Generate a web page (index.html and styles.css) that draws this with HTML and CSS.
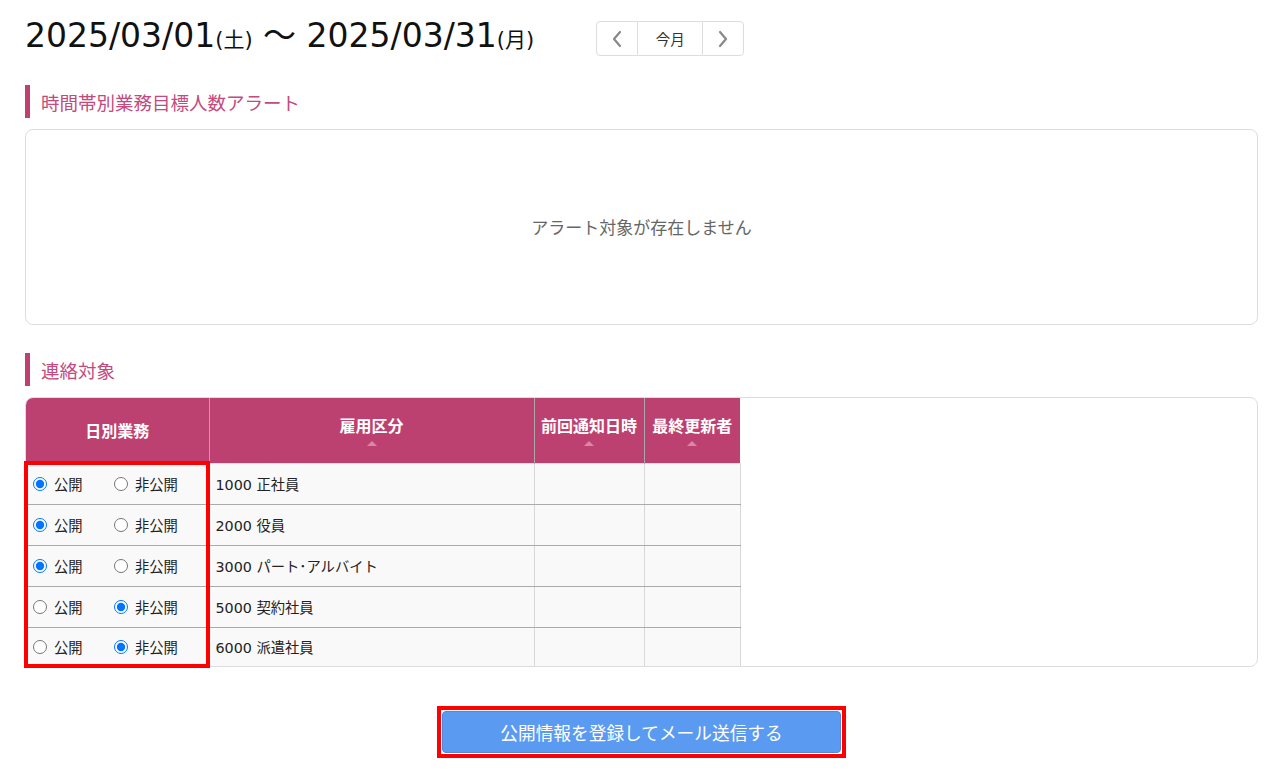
FILE: index.html
```html
<!DOCTYPE html>
<html lang="ja">
<head>
<meta charset="utf-8">
<title>連絡対象</title>
<link rel="stylesheet" href="styles.css">
</head>
<body>
<div class="page">
  <div class="date-bar">
    <h1 class="date-range">2025/03/01<span class="dow">(土)</span> <span class="tilde">〜</span> 2025/03/31<span class="dow">(月)</span></h1>
    <div class="nav-group">
      <button class="nav-btn nav-arrow" type="button" aria-label="前月">
        <svg width="12" height="18" viewBox="0 0 12 18"><path d="M9 2 L3 9 L9 16" fill="none" stroke="#888" stroke-width="2.2" stroke-linecap="round" stroke-linejoin="round"/></svg>
      </button>
      <button class="nav-btn nav-today" type="button">今月</button>
      <button class="nav-btn nav-arrow" type="button" aria-label="翌月">
        <svg width="12" height="18" viewBox="0 0 12 18"><path d="M3 2 L9 9 L3 16" fill="none" stroke="#888" stroke-width="2.2" stroke-linecap="round" stroke-linejoin="round"/></svg>
      </button>
    </div>
  </div>

  <h2 class="section-title">時間帯別業務目標人数アラート</h2>
  <div class="alert-box">アラート対象が存在しません</div>

  <h2 class="section-title section-title-2">連絡対象</h2>
  <div class="table-area">
    <div class="table-box">
      <table class="target-table">
        <thead>
          <tr>
            <th class="col-pub">日別業務</th>
            <th class="col-kind">雇用区分<span class="sort"></span></th>
            <th class="col-date">前回通知日時<span class="sort"></span></th>
            <th class="col-user">最終更新者<span class="sort"></span></th>
          </tr>
        </thead>
        <tbody>
          <tr>
            <td class="pub"><label class="opt"><input type="radio" name="r1" checked>公開</label><label class="opt"><input type="radio" name="r1">非公開</label></td>
            <td>1000 正社員</td><td></td><td></td>
          </tr>
          <tr>
            <td class="pub"><label class="opt"><input type="radio" name="r2" checked>公開</label><label class="opt"><input type="radio" name="r2">非公開</label></td>
            <td>2000 役員</td><td></td><td></td>
          </tr>
          <tr>
            <td class="pub"><label class="opt"><input type="radio" name="r3" checked>公開</label><label class="opt"><input type="radio" name="r3">非公開</label></td>
            <td>3000 パート･アルバイト</td><td></td><td></td>
          </tr>
          <tr>
            <td class="pub"><label class="opt"><input type="radio" name="r4">公開</label><label class="opt"><input type="radio" name="r4" checked>非公開</label></td>
            <td>5000 契約社員</td><td></td><td></td>
          </tr>
          <tr>
            <td class="pub"><label class="opt"><input type="radio" name="r5">公開</label><label class="opt"><input type="radio" name="r5" checked>非公開</label></td>
            <td>6000 派遣社員</td><td></td><td></td>
          </tr>
        </tbody>
      </table>
    </div>
    <div class="highlight"></div>
  </div>

  <div class="submit-row">
    <div class="submit-frame">
      <button class="submit-btn" type="button">公開情報を登録してメール送信する</button>
    </div>
  </div>
</div>
</body>
</html>
```

FILE: styles.css
```css
* { box-sizing: border-box; }
html, body { margin: 0; padding: 0; background: #fff; }
body {
  font-family: "Noto Sans CJK JP", "Noto Sans", "Liberation Sans", sans-serif;
  color: #333;
}
.page {
  width: 1233px;
  margin-left: 25px;
}
.date-bar {
  display: flex;
  align-items: flex-start;
  height: 75px;
}
.date-range {
  margin: 17px 0 0 0;
  font-family: "DejaVu Sans", "Noto Sans CJK JP", sans-serif;
  font-weight: 400;
  font-size: 33px;
  line-height: 1;
  color: #111;
  white-space: nowrap;
}
.dow {
  font-family: "DejaVu Sans", "Noto Sans CJK JP", sans-serif;
  font-size: 21px;
}
.tilde {
  font-family: "Noto Sans CJK JP", sans-serif;
  font-size: 33px;
}
.nav-group {
  display: flex;
  margin-left: 62px;
  margin-top: 21px;
  height: 35px;
}
.nav-btn {
  background: #fff;
  border: 1px solid #ddd;
  margin: 0;
  padding: 0;
  display: flex;
  align-items: center;
  justify-content: center;
  font-family: "Noto Sans CJK JP", sans-serif;
  font-size: 14.5px;
  color: #333;
  height: 35px;
}
.nav-arrow { width: 42px; }
.nav-arrow:first-child { border-radius: 4px 0 0 4px; }
.nav-arrow:last-child { border-radius: 0 4px 4px 0; }
.nav-today { width: 64px; border-left: none; border-right: none; }

.section-title {
  margin: 10px 0 11px 0;
  height: 33px;
  border-left: 5px solid #c0406f;
  padding-left: 11px;
  display: flex;
  align-items: center;
  font-size: 18.5px;
  font-weight: 400;
  color: #c24a7e;
}
.section-title-2 { margin-top: 28px; }

.alert-box {
  height: 196px;
  border: 1px solid #ddd;
  border-radius: 8px;
  display: flex;
  align-items: center;
  justify-content: center;
  font-size: 17px;
  color: #666;
  padding-bottom: 2px;
}

.table-area {
  position: relative;
}
.table-box {
  height: 270px;
  border: 1px solid #ddd;
  border-radius: 8px;
  overflow: hidden;
}
.target-table {
  width: 714px;
  border-collapse: collapse;
  table-layout: fixed;
  font-family: "DejaVu Sans", "Noto Sans CJK JP", sans-serif;
  font-size: 14.3px;
}
.target-table th {
  background: #bc4170;
  color: #fff;
  font-family: "Noto Sans CJK JP", sans-serif;
  font-weight: 700;
  font-size: 16px;
  height: 65px;
  padding: 0;
  border-right: 1px solid #a8a8a8;
  vertical-align: middle;
  line-height: 1.3;
  white-space: nowrap;
}
.target-table th:last-child { border-right: none; }
.target-table th .sort {
  display: block;
  margin: 5px auto 0;
  width: 0; height: 0;
  border-left: 5px solid transparent;
  border-right: 5px solid transparent;
  border-bottom: 5px solid #d987a7;
}
.col-pub { width: 183px; }
.col-kind { width: 325px; }
.col-date { width: 110px; }
.col-user { width: 96px; }
.target-table td {
  background: #f9f9f9;
  height: 41px;
  border-top: 1px solid #e2e2e2;
  border-bottom: 1px solid #aaa;
  border-right: 1px solid #d8d8d8;
  padding: 0 6px;
  color: #222;
  white-space: nowrap;
}
.target-table tbody tr:last-child td { height: 39px; }
.opt {
  display: inline-flex;
  align-items: center;
  width: 81px;
  font-family: "Noto Sans CJK JP", sans-serif;
  font-size: 14.3px;
  cursor: pointer;
}
.opt:last-child { width: auto; }
.opt input {
  margin: 0 7px 0 1px;
  width: 14px;
  height: 14px;
}
.highlight {
  position: absolute;
  left: -1px;
  top: 64px;
  width: 186px;
  height: 207px;
  border: 4px solid #f00;
  pointer-events: none;
}

.submit-row {
  display: flex;
  justify-content: center;
  margin-top: 39px;
}
.submit-frame {
  border: 4px solid #f00;
  padding: 1px;
  background: #fff;
}
.submit-btn {
  width: 399px;
  height: 42px;
  background: #5a9af0;
  border: 1px solid #4b8be6;
  border-radius: 4px;
  color: #fff;
  font-family: "Noto Sans CJK JP", sans-serif;
  font-size: 17.7px;
  display: block;
  padding: 0;
}
```
